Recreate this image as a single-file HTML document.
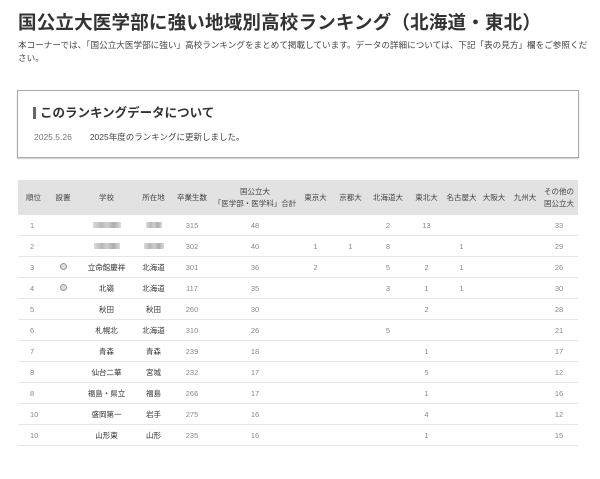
<!DOCTYPE html><html><head><meta charset="utf-8"><style>
body{margin:0;background:#fff;font-family:"Liberation Sans","Noto Sans CJK JP",sans-serif;color:#333;width:600px;height:479px;overflow:hidden;position:relative}
h1{position:absolute;left:18px;top:9px;margin:0;font-size:18.5px;font-weight:bold;color:#333;letter-spacing:0.2px}
.p{position:absolute;left:18px;top:39px;width:570px;font-size:8.6px;line-height:13px;color:#444}
.box{position:absolute;left:17px;top:90px;width:560px;height:66px;border:1px solid #aaa;box-shadow:0 1px 1px #ccc}
.box h2{position:absolute;left:15px;top:16px;margin:0;font-size:12.5px;font-weight:bold;border-left:3px solid #666;padding-left:4px;line-height:12px}
.box .d{position:absolute;left:16px;top:40px;font-size:8.5px;color:#777}
.box .d b{font-weight:normal;color:#444;margin-left:18px}
table{position:absolute;left:18px;top:180px;width:560px;border-collapse:collapse;font-size:7.5px;color:#888;table-layout:fixed}
th{background:#e2e2e2;color:#444;font-weight:normal;height:35px;line-height:12px;padding:0}
td{height:20px;border-bottom:1px solid #e6e6e6;text-align:center;padding:0}
td:first-child{text-align:left;padding-left:12px}
th:first-child{text-align:left;padding-left:8px}
td.s{color:#333}
.bl{display:inline-block;height:6px;background:linear-gradient(90deg,#ccc,#999 30%,#bbb 50%,#888 75%,#ccc);opacity:.7}
.o{display:inline-block;width:5px;height:5px;border-radius:50%;border:1.5px solid #999;background:#ddd}
</style></head><body>
<h1>国公立大医学部に強い地域別高校ランキング（北海道・東北）</h1>
<div class="p">本コーナーでは、「国公立大医学部に強い」高校ランキングをまとめて掲載しています。データの詳細については、下記「表の見方」欄をご参照ください。</div>
<div class="box"><h2>このランキングデータについて</h2><div class="d">2025.5.26<b>2025年度のランキングに更新しました。</b></div></div>
<table>
<colgroup><col style="width:30px"><col style="width:30px"><col style="width:57px"><col style="width:37px"><col style="width:40px"><col style="width:86px"><col style="width:35px"><col style="width:35px"><col style="width:40px"><col style="width:37px"><col style="width:33px"><col style="width:32px"><col style="width:30px"><col style="width:38px"></colgroup>
<tr><th>順位</th><th>設置</th><th>学校</th><th>所在地</th><th>卒業生数</th><th>国公立大<br>「医学部・医学科」合計</th><th>東京大</th><th>京都大</th><th>北海道大</th><th>東北大</th><th>名古屋大</th><th>大阪大</th><th>九州大</th><th>その他の<br>国公立大</th></tr>
<tr><td>1</td><td></td><td><span class="bl" style="width:28px"></span></td><td><span class="bl" style="width:16px"></span></td><td>315</td><td>48</td><td></td><td></td><td>2</td><td>13</td><td></td><td></td><td></td><td>33</td></tr>
<tr><td>2</td><td></td><td><span class="bl" style="width:26px"></span></td><td><span class="bl" style="width:20px"></span></td><td>302</td><td>40</td><td>1</td><td>1</td><td>8</td><td></td><td>1</td><td></td><td></td><td>29</td></tr>
<tr><td>3</td><td><span class="o"></span></td><td class="s">立命館慶祥</td><td class="s">北海道</td><td>301</td><td>36</td><td>2</td><td></td><td>5</td><td>2</td><td>1</td><td></td><td></td><td>26</td></tr>
<tr><td>4</td><td><span class="o"></span></td><td class="s">北嶺</td><td class="s">北海道</td><td>117</td><td>35</td><td></td><td></td><td>3</td><td>1</td><td>1</td><td></td><td></td><td>30</td></tr>
<tr><td>5</td><td></td><td class="s">秋田</td><td class="s">秋田</td><td>260</td><td>30</td><td></td><td></td><td></td><td>2</td><td></td><td></td><td></td><td>28</td></tr>
<tr><td>6</td><td></td><td class="s">札幌北</td><td class="s">北海道</td><td>310</td><td>26</td><td></td><td></td><td>5</td><td></td><td></td><td></td><td></td><td>21</td></tr>
<tr><td>7</td><td></td><td class="s">青森</td><td class="s">青森</td><td>239</td><td>18</td><td></td><td></td><td></td><td>1</td><td></td><td></td><td></td><td>17</td></tr>
<tr><td>8</td><td></td><td class="s">仙台二華</td><td class="s">宮城</td><td>232</td><td>17</td><td></td><td></td><td></td><td>5</td><td></td><td></td><td></td><td>12</td></tr>
<tr><td>8</td><td></td><td class="s">福島・県立</td><td class="s">福島</td><td>266</td><td>17</td><td></td><td></td><td></td><td>1</td><td></td><td></td><td></td><td>16</td></tr>
<tr><td>10</td><td></td><td class="s">盛岡第一</td><td class="s">岩手</td><td>275</td><td>16</td><td></td><td></td><td></td><td>4</td><td></td><td></td><td></td><td>12</td></tr>
<tr><td>10</td><td></td><td class="s">山形東</td><td class="s">山形</td><td>235</td><td>16</td><td></td><td></td><td></td><td>1</td><td></td><td></td><td></td><td>15</td></tr>
</table>
</body></html>
